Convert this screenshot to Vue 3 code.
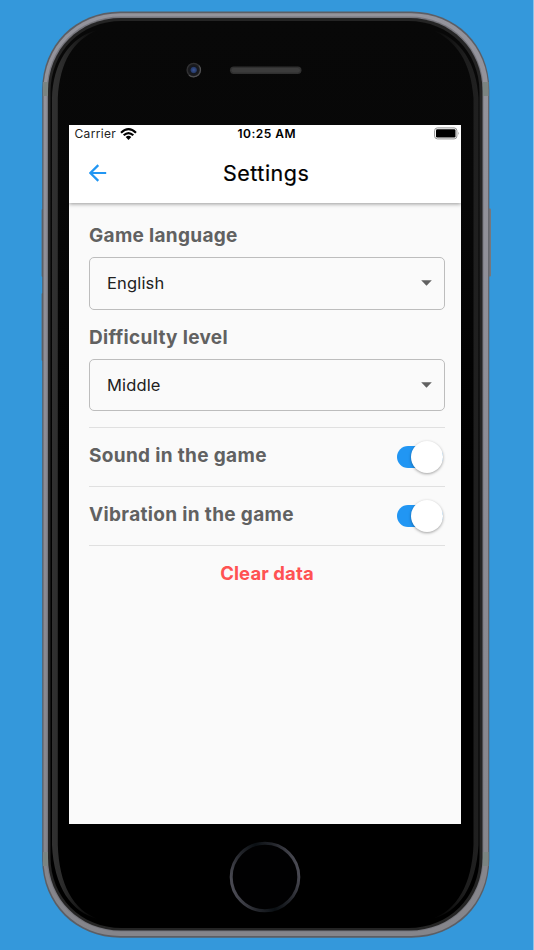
<template>
  <div class="stage">
    <svg class="device" viewBox="0 0 534 950" aria-hidden="true">
      <defs>
        <linearGradient id="metal" x1="0" y1="0" x2="0" y2="1">
          <stop offset="0" stop-color="#94949c" />
          <stop offset="0.5" stop-color="#8c8c95" />
          <stop offset="1" stop-color="#85858b" />
        </linearGradient>
        <linearGradient id="glass" x1="0" y1="0" x2="0" y2="1">
          <stop offset="0" stop-color="#080808" />
          <stop offset="0.2" stop-color="#070707" />
          <stop offset="0.5" stop-color="#000" />
        </linearGradient>
        <linearGradient id="shineLeft" x1="0" y1="0" x2="1" y2="0">
          <stop offset="0" stop-color="#303030" />
          <stop offset="0.2" stop-color="#2d2d2d" />
          <stop offset="1" stop-color="#2d2d2d" stop-opacity="0" />
        </linearGradient>
        <linearGradient id="shineRight" x1="1" y1="0" x2="0" y2="0">
          <stop offset="0" stop-color="#202020" />
          <stop offset="0.3" stop-color="#1e1e1e" />
          <stop offset="1" stop-color="#1e1e1e" stop-opacity="0" />
        </linearGradient>
        <linearGradient id="ring" x1="0" y1="0.65" x2="1" y2="0.35">
          <stop offset="0" stop-color="#4c4c55" />
          <stop offset="0.25" stop-color="#24262c" />
          <stop offset="0.5" stop-color="#0a0f13" />
          <stop offset="0.75" stop-color="#24262c" />
          <stop offset="1" stop-color="#4c4c55" />
        </linearGradient>
        <radialGradient id="lens">
          <stop offset="0" stop-color="#3a5596" />
          <stop offset="0.45" stop-color="#263a69" />
          <stop offset="0.6" stop-color="#15171d" />
          <stop offset="1" stop-color="#1c1c1e" />
        </radialGradient>
      </defs>

      <!-- side buttons -->
      <rect x="41.600" y="209" width="3" height="68" rx="1" fill="#66666c" />
      <rect x="41.600" y="293" width="3" height="68" rx="1" fill="#66666c" />
      <rect x="487" y="208.500" width="4" height="68" rx="1" fill="#77777c" />

      <!-- metal frame -->
      <path class="edge" :d="outline(42.2, 11.500, 489.300, 937.700, 78)" />
      <path fill="url(#metal)" :d="outline(43.500, 13.200, 488.200, 936, 77)" />
      <path fill="#77777e" :d="outline(46.800, 16.500, 483.500, 931.500, 74)" />
      <g fill="#7b8482">
        <rect x="43" y="82" width="5" height="14" />
        <rect x="482.500" y="82" width="6" height="14" />
        <rect x="43" y="852" width="5" height="14" />
        <rect x="482.500" y="852" width="6" height="14" />
      </g>
      <path fill="#242424" :d="outline(48, 18, 482.500, 930.500, 73)" />
      <path fill="url(#glass)" :d="outline(50.500, 21, 479.500, 928, 71)" />

      <!-- glass reflections -->
      <path
        fill="url(#shineLeft)"
        d="M52 98C53 65 68 37 98 30C73 40 60 62 57.800 98V845C59 884 73 910 98 919C71 912 54 887 52 845Z"
      />
      <path
        fill="url(#shineRight)"
        d="M478.500 98C477 65 461 37 432 30C456 40 471 62 473.500 98V845C472 884 457 910 432 919C459 912 476 887 478.500 845Z"
      />

      <circle cx="193.700" cy="70" r="7.300" fill="#303032" />
      <circle cx="193.700" cy="70" r="6" fill="url(#lens)" />
      <path d="M199 65.500A7 7 0 0 1 189 75.200" fill="none" stroke="#515153" stroke-width="1.200" />
      <rect x="230" y="66.500" width="71.500" height="7.500" rx="3.700" fill="#303030" />
      <rect x="231.500" y="68" width="68.500" height="4.500" rx="2.200" fill="#3c3c3c" />

      <circle cx="265" cy="877" r="33.800" fill="#010102" stroke="url(#ring)" stroke-width="3" />
    </svg>

    <main class="screen">
      <header class="top">
        <div class="status">
          <div class="carrier">
            <span>Carrier</span>
            <svg width="17" height="12" viewBox="0 0 17 12">
              <g fill="none" stroke="#000" stroke-width="2.200">
                <path d="M1 4.700Q8.500 -2.300 16 4.700" />
                <path d="M3.700 7.300Q8.500 2.800 13.300 7.300" />
              </g>
              <path d="M5.700 9.100Q8.500 6.500 11.300 9.100L8.500 12Z" />
            </svg>
          </div>
          <span class="time">10:25 AM</span>
          <svg class="battery" width="26" height="13" viewBox="0 0 26 13">
            <rect x="0.600" y="0.900" width="22.300" height="11" rx="2.800" fill="none" stroke="#929292" />
            <rect x="2" y="2.300" width="19.500" height="8.200" rx="1.200" />
            <path d="M24.200 4.800Q25.500 6.400 24.200 8Z" fill="#888" />
          </svg>
        </div>
        <div class="bar">
          <svg class="back" width="18" height="18" viewBox="0 0 18 18">
            <path d="M17.200 9H1.600M9.300 1.100L1.400 9L9.300 16.900" />
          </svg>
          <h1>Settings</h1>
        </div>
      </header>

      <section class="content">
        <div v-for="field in fields" :key="field.label" class="field">
          <label>{{ field.label }}</label>
          <div class="select">
            <span>{{ field.value }}</span>
            <svg width="11" height="6" viewBox="0 0 11 6"><path d="M0.200 0.200H10.800L5.500 5.700Z" /></svg>
          </div>
        </div>

        <div class="toggles">
          <div v-for="item in toggles" :key="item.label" class="toggle-row">
            <span>{{ item.label }}</span>
            <button class="switch" :class="{ on: item.on }" @click="item.on = !item.on">
              <i class="thumb"></i>
            </button>
          </div>
        </div>

        <button class="clear">Clear data</button>
      </section>
    </main>
  </div>
</template>

<script setup>
import { reactive } from 'vue'

const fields = [
  { label: 'Game language', value: 'English' },
  { label: 'Difficulty level', value: 'Middle' }
]

const toggles = reactive([
  { label: 'Sound in the game', on: true },
  { label: 'Vibration in the game', on: true }
])

// rounded body outline
const outline = (l, t, r, b, c) => {
  const k = c * 0.43
  return `M${l + c} ${t}H${r - c}C${r - k} ${t} ${r} ${t + k} ${r} ${t + c}V${b - c}` +
    `C${r} ${b - k} ${r - k} ${b} ${r - c} ${b}H${l + c}` +
    `C${l + k} ${b} ${l} ${b - k} ${l} ${b - c}V${t + c}C${l} ${t + k} ${l + k} ${t} ${l + c} ${t}Z`
}
</script>

<style>
body {
  background: #3498db;
}
</style>

<style scoped>
.stage {
  position: relative;
  box-sizing: border-box;
  width: 534px;
  height: 950px;
  padding: 125px 71.5px 126px 69px;
  overflow: hidden;
  background: #3498db;
  border-right: 1px solid #8ac3ea;
  font-family: Inter, "Liberation Sans", sans-serif;
}

.device {
  position: absolute;
  top: 0;
  left: 0;
  width: 534px;
  height: 950px;
}

.edge {
  fill: #5c5e64;
}

.screen {
  position: relative;
  width: 392.4px;
  height: 699px;
  overflow: hidden;
  background: #fafafa;
}

.top {
  position: relative;
  height: 78px;
  background: #fff;
  box-shadow: 0 1px 4px rgba(0, 0, 0, 0.4);
}

.status {
  display: grid;
  grid-template-columns: 1fr auto 1fr;
  align-items: center;
  height: 17px;
  padding: 0 1.5px 0 5.5px;
  font-size: 12px;
  color: #000;
}

.carrier {
  display: flex;
  align-items: center;
  gap: 4px;
  letter-spacing: 0.32px;
  color: #222;
}

.time {
  font-weight: 600;
  letter-spacing: 0.48px;
  margin-right: 1px;
}

.battery {
  justify-self: end;
}

.bar {
  display: grid;
  grid-template-columns: 18px 1fr 18px;
  align-items: center;
  height: 62px;
  padding: 0 18px 0 20px;
}

.back {
  fill: none;
  stroke: #2196f3;
  stroke-width: 2.2;
}

h1 {
  margin: 0;
  text-align: center;
  font-size: 21.5px;
  font-weight: 400;
  letter-spacing: 0.5px;
  color: #000;
  -webkit-text-stroke: 0.2px #000;
}

.content {
  display: flex;
  flex-direction: column;
  padding: 20px 16.4px 0 20px;
}

.field {
  height: 101.500px;
}

label {
  display: block;
  height: 34px;
  line-height: 26px;
  font-size: 19px;
  font-weight: 650;
  letter-spacing: 0.31px;
  color: #616161;
}

.select {
  display: flex;
  align-items: center;
  justify-content: space-between;
  box-sizing: border-box;
  height: 52.5px;
  padding: 0 12px 0 17px;
  border: 1px solid #bdbdbd;
  border-radius: 5px;
  font-size: 16.500px;
  line-height: 20px;
  letter-spacing: 0.15px;
  color: #212121;
}

.select svg {
  fill: #616161;
}

.toggles {
  margin-top: 1px;
  border-top: 1px solid #e0e0e0;
}

.toggle-row {
  display: flex;
  justify-content: space-between;
  box-sizing: border-box;
  height: 59.2px;
  padding: 13px 2px 0 0;
  border-bottom: 1px solid #e0e0e0;
  font-size: 19px;
  line-height: 29px;
  font-weight: 650;
  letter-spacing: 0.34px;
  color: #616161;
}

.switch {
  display: flex;
  align-items: center;
  width: 46px;
  height: 22px;
  margin-top: 5px;
  padding: 0;
  border: 0;
  border-radius: 11px;
  background: #9e9e9e;
}

.switch.on {
  justify-content: flex-end;
  background: #2196f3;
}

.thumb {
  width: 32px;
  height: 32px;
  flex: none;
  border-radius: 50%;
  background: #fff;
  box-shadow: 0 1px 3px rgba(0, 0, 0, 0.36);
}

.clear {
  align-self: center;
  margin-top: 13px;
  padding: 0;
  border: 0;
  background: none;
  font-family: inherit;
  font-size: 18.5px;
  line-height: 28px;
  font-weight: 650;
  letter-spacing: 0.1px;
  color: #ff5252;
}
</style>
